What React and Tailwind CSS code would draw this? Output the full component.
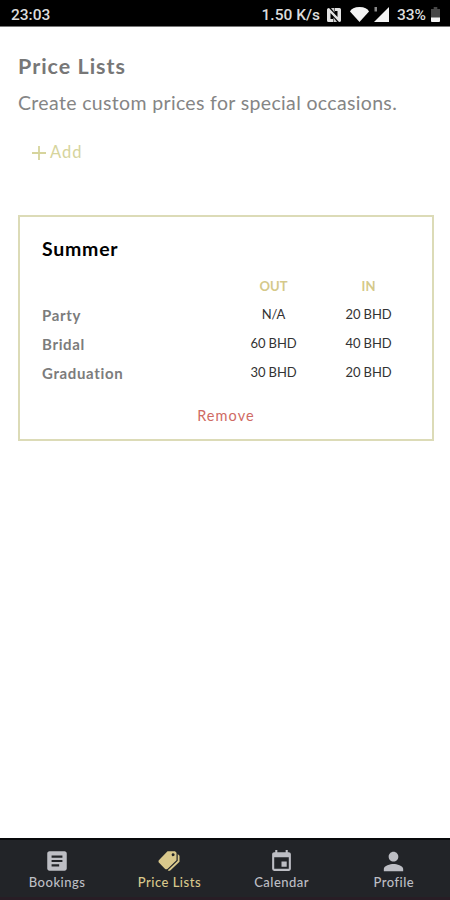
import { useState } from 'react'
import { MdArticle, MdEvent, MdPerson } from 'react-icons/md'
import { IoMdPricetags } from 'react-icons/io'

const tabs = [
  { name: 'Bookings', icon: MdArticle, size: 26 },
  { name: 'Price Lists', icon: IoMdPricetags, size: 24 },
  { name: 'Calendar', icon: MdEvent, size: 25 },
  { name: 'Profile', icon: MdPerson, size: 29 },
]

const prices = [
  { service: 'Party', out: 'N/A', in: '20 BHD' },
  { service: 'Bridal', out: '60 BHD', in: '40 BHD' },
  { service: 'Graduation', out: '30 BHD', in: '20 BHD' },
]

function StatusBar() {
  return (
    <div className="h-[27px] shrink-0 bg-black border-b border-[#777] flex items-center justify-between pl-[11px] pr-[10px] pt-[5px] font-[Roboto,sans-serif] font-medium text-[15.5px] leading-none text-[#dcdcdc]">
      <span>23:03</span>
      <div className="flex items-center">
        <span className="tracking-[0px]">1.50 K/s</span>
        {/* NFC */}
        <svg width="14" height="14" viewBox="0 0 14 14" className="ml-[7px] -mt-[2px]">
          <path d="M0 1.5Q0 0 2 0L10.5 9V3H8V0H12.5Q14 0 14 1.5V12.5Q14 14 12 14L3.5 5V11H6V14H1.5Q0 14 0 12.5Z" fill="#e4e4e4" />
          <path d="M4 0H7.5V4.5Z" fill="#ccc" />
          <path d="M6.5 14H10L6.5 9.5Z" fill="#ccc" />
        </svg>
        {/* Wifi */}
        <svg width="19" height="15" viewBox="0 0 19 15" className="ml-[9px] -mt-[2px]">
          <path d="M0 4.5Q2 0 9.5 0T19 4.5L9.5 15Z" fill="#f4f4f4" />
        </svg>
        {/* Signal */}
        <svg width="15" height="15" viewBox="0 0 15 15" className="ml-[5px] -mt-[2px]">
          <path d="M15 0V15H0Z" fill="#f4f4f4" />
          <path d="M0.5 0h2.5v4.5h-2.5z" fill="#888" />
        </svg>
        <span className="ml-[8px]">33%</span>
        {/* Battery */}
        <svg width="9" height="15" viewBox="0 0 10 15" preserveAspectRatio="none" className="ml-[5px] -mt-[3px]">
          <path d="M3 0h4v2h3v9H0V2h3z" fill="#474747" />
          <path d="M0 10.5h10V14a1 1 0 0 1-1 1H1a1 1 0 0 1-1-1z" fill="#f4f4f4" />
        </svg>
      </div>
    </div>
  )
}

function PriceCard({ title, rows, onRemove }) {
  return (
    <div className="mt-[50px] h-[226px] border-2 border-[#dcdbb7] px-[22px] pt-[19px] flex flex-col">
      <h2 className="h-[26px] leading-[26px] text-[19.5px] font-bold text-black tracking-[0.75px]">{title}</h2>
      <div className="mt-[10px] grid grid-cols-[184px_95px_95px] auto-rows-[29px] items-center text-[13px] text-[#333]">
        <span />
        <span className="text-center font-bold text-[#d5c98a]">OUT</span>
        <span className="text-center font-bold text-[#d5c98a]">IN</span>
        {rows.map((row) => (
          <div key={row.service} className="contents">
            <span className="text-[15px] font-bold text-[#7c7c7c] tracking-[0.65px]">{row.service}</span>
            <span className="-mt-px text-center tracking-[-0.1px]">{row.out}</span>
            <span className="-mt-px text-center tracking-[-0.1px]">{row.in}</span>
          </div>
        ))}
      </div>
      <button onClick={onRemove} className="mt-[18px] self-center text-[14.5px] leading-[20px] tracking-[1.1px] text-[#cf6a63]">
        Remove
      </button>
    </div>
  )
}

export default function App() {
  const [active, setActive] = useState('Price Lists')
  const [showCard, setShowCard] = useState(true)

  return (
    <div className="w-[450px] h-[900px] bg-white flex flex-col overflow-hidden font-[Lato,sans-serif]">
      <StatusBar />

      <main className="flex-1 pl-[18px] pr-[16px] pt-[25px]">
        <h1 className="h-[28px] leading-[28px] text-[21.5px] font-bold tracking-[1px] text-[#777]">Price Lists</h1>
        <p className="mt-[10px] h-[26px] leading-[26px] text-[19.5px] tracking-[0.34px] whitespace-nowrap text-[#858585]">
          Create custom prices for special occasions.
        </p>
        <button className="mt-[24px] ml-[14px] h-[24px] flex items-center gap-[4px] text-[16.5px] tracking-[1px] text-[#d6d49c]">
          <svg width="14" height="14" viewBox="0 0 14 14" className="mt-[2px]">
            <path d="M7 0V14M0 7H14" stroke="currentColor" strokeWidth="1.8" />
          </svg>
          Add
        </button>

        {showCard && (
          <div className="pt-px">
            <PriceCard title="Summer" rows={prices} onRemove={() => setShowCard(false)} />
          </div>
        )}
      </main>

      <nav className="h-[62px] shrink-0 bg-[#222428] border-t-2 border-t-[#08090b] border-b-3 border-b-[#281d25] grid grid-cols-4 pl-px">
        {tabs.map(({ name, icon: Icon, size }) => (
          <button
            key={name}
            onClick={() => setActive(name)}
            className={`flex flex-col items-center pt-[7px] ${active === name ? 'text-[#d9c88c]' : 'text-[#bdbec4]'}`}
          >
            <span className="h-[28px] shrink-0 flex items-center justify-center">
              <Icon size={size} />
            </span>
            <span className="-mt-[1px] text-[13px] leading-[16px] font-medium tracking-[0.5px]">{name}</span>
          </button>
        ))}
      </nav>
    </div>
  )
}
